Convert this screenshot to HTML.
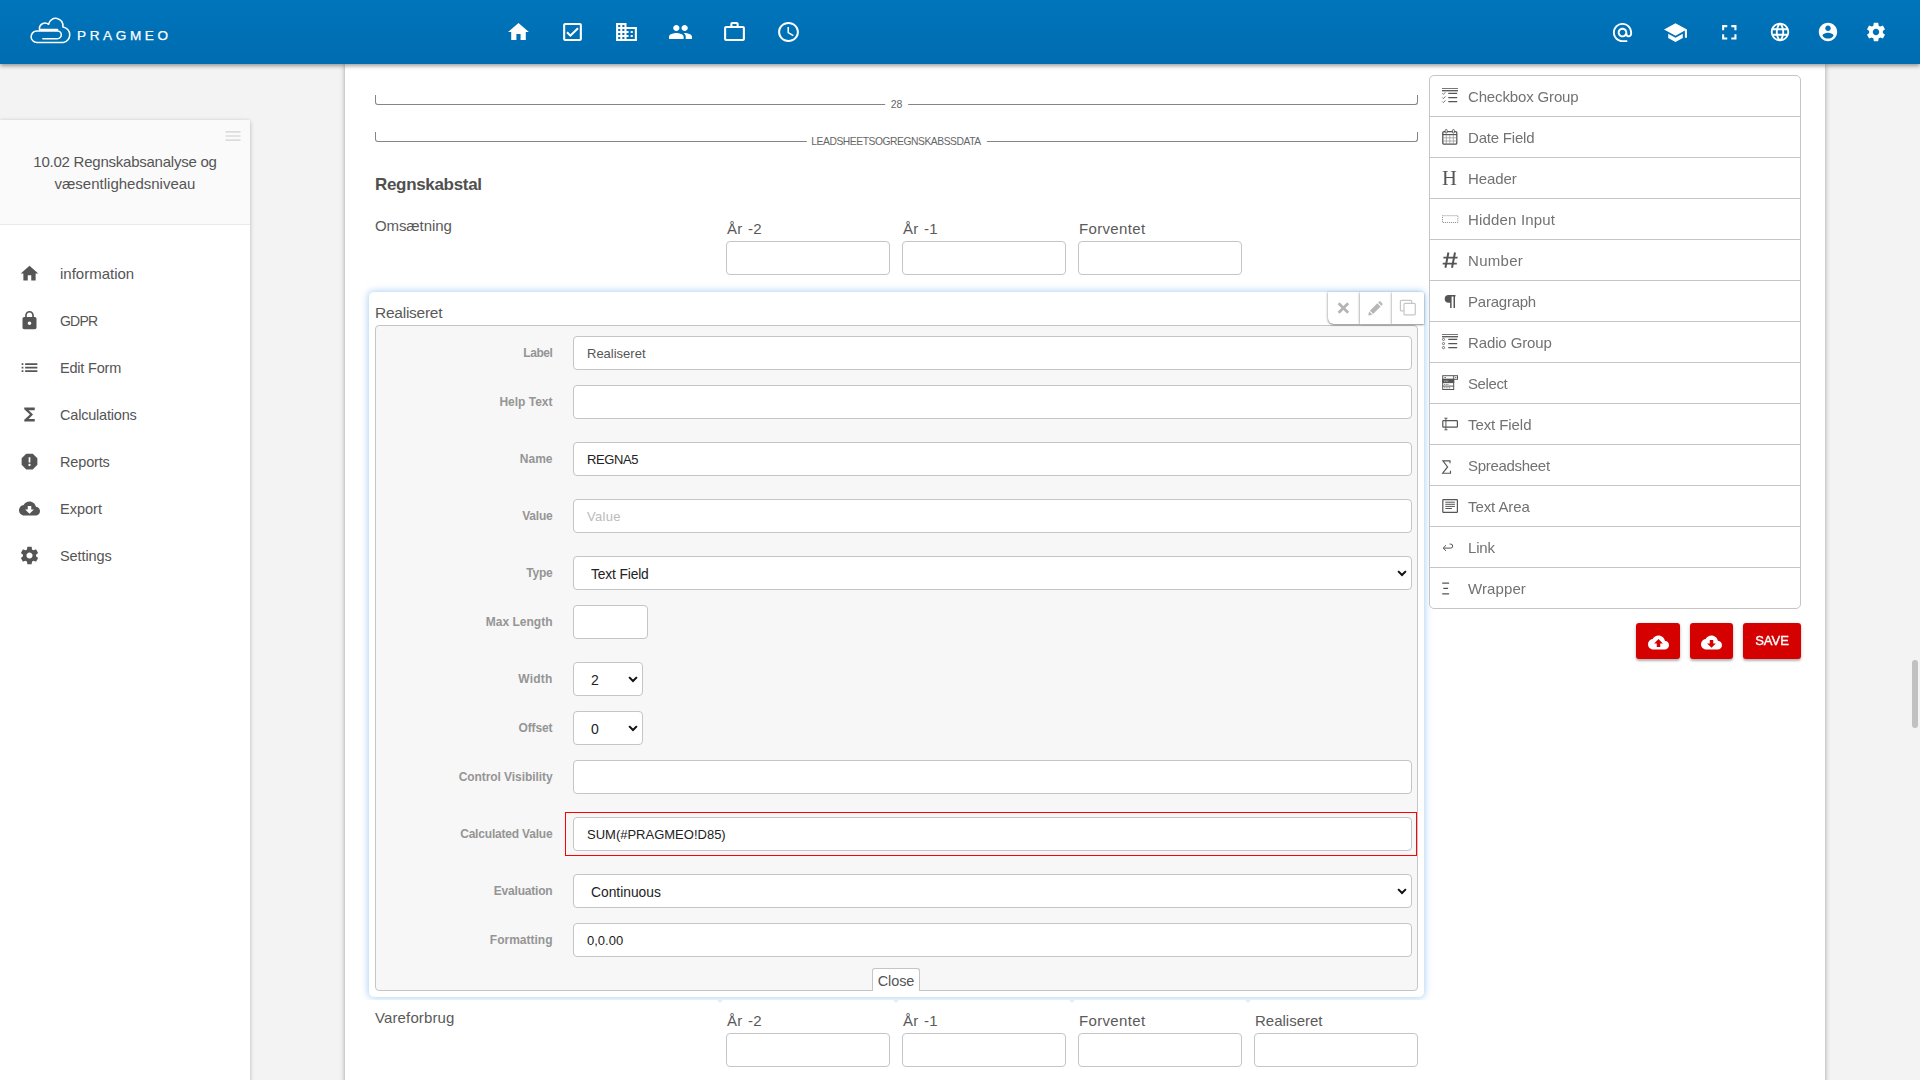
<!DOCTYPE html>
<html>
<head>
<meta charset="utf-8">
<title>Pragmeo</title>
<style>
*{box-sizing:border-box;margin:0;padding:0}
html,body{width:1920px;height:1080px;overflow:hidden;background:#f3f3f3;font-family:"Liberation Sans",sans-serif;color:#555}
.abs{position:absolute}
#top{position:absolute;left:0;top:0;width:1920px;height:64px;background:linear-gradient(#0075bb,#006cb1);box-shadow:0 2px 4px rgba(0,0,0,.38);z-index:10}
#top svg{position:absolute;fill:#fff}
#logo-text{position:absolute;left:77px;top:28px;font-size:13.6px;letter-spacing:3.6px;-webkit-text-stroke:0.25px #fff;color:#fff;line-height:16px}
#side{position:absolute;left:0;top:120px;width:250px;height:980px;background:#fff;box-shadow:0 1px 4px rgba(0,0,0,.26);border-radius:0 2px 0 0}
#side-head{position:absolute;left:0;top:0;width:250px;height:105px;background:#fafafa;border-bottom:1px solid #e9e9e9;border-radius:0 2px 0 0}
#side-title{position:absolute;left:0;top:31px;width:250px;text-align:center;font-size:15px;line-height:22px;color:#555}
.nav{position:absolute;left:60px;font-size:14.5px;line-height:20px;color:#555}
.navi{position:absolute;fill:#555}
#main{position:absolute;left:345px;top:64px;width:1480px;height:1030px;background:#fff;box-shadow:0 0 5px rgba(0,0,0,.35)}
.fs{position:absolute;left:375px;width:1043px;height:10px;border:1px solid #858585;border-top:0;border-radius:0 0 3px 3px}
.fs span{position:absolute;left:50%;transform:translateX(-50%);top:3px;background:#fff;font-size:10.5px;line-height:12px;padding:0 6px;color:#666;white-space:nowrap}
.lbl{position:absolute;font-size:15px;line-height:20px;color:#5a5a5a;white-space:nowrap}
.ar{word-spacing:1px;letter-spacing:.25px}
.inp{position:absolute;height:34px;background:#fff;border:1px solid #c5c5c5;border-radius:4px}
#sel{position:absolute;left:369px;top:292px;width:1055px;height:705px;background:#fff;border-radius:5px;box-shadow:0 0 7px 1px rgba(60,150,230,.42)}
#panel{position:absolute;left:375px;top:325px;width:1043px;height:666px;background:#f7f7f7;border:1px solid #c5c5c5;border-radius:4px}
.fl{position:absolute;left:375.5px;width:177px;text-align:right;font-size:12px;font-weight:bold;color:#959595;line-height:16px;white-space:nowrap}
.fi{position:absolute;left:573px;width:839px;height:34px;background:#fff;border:1px solid #c5c5c5;border-radius:4px;font-size:13px;line-height:33px;padding-left:13px;color:#555;white-space:nowrap}
.fi.dark{color:#222}
.act{top:292px;width:32px;height:32px;background:#fff;box-shadow:0 1px 2px rgba(0,0,0,.42),-1px 0 3px rgba(0,0,0,.13)}
.chev{position:absolute;width:10px;height:6.7px}
#list{position:absolute;left:1429px;top:75px;width:372px;height:534px;background:#fff;border:1px solid #c5c5c5;border-radius:5px}
.li{position:absolute;left:0;width:370px;height:41px;border-bottom:1px solid #c5c5c5}
.li span{position:absolute;left:38px;top:11px;font-size:15px;line-height:20px;color:#727272;white-space:nowrap;will-change:transform}
.li svg{position:absolute}
.btn{position:absolute;top:623px;height:36px;background:#d50000;border-radius:3px;box-shadow:0 2px 2px rgba(0,0,0,.22),0 1px 4px rgba(0,0,0,.14)}
</style>
</head>
<body>
<div id="main"></div>
<div class="fs" style="top:95px"><span>28</span></div>
<div class="fs" style="top:132px"><span style="font-size:10.3px;letter-spacing:-0.45px;padding:0 6px 0 5px;top:4px">LEADSHEETSOGREGNSKABSSDATA</span></div>
<div class="lbl" style="left:375px;top:174px;font-size:17px;font-weight:bold;line-height:22px;letter-spacing:-0.32px;color:#505050">Regnskabstal</div>
<div class="lbl" style="left:375px;top:216px;letter-spacing:-.1px">Omsætning</div>
<div class="lbl ar" style="left:727px;top:219px">År -2</div><div class="inp" style="left:726px;top:241px;width:164px"></div>
<div class="lbl ar" style="left:903px;top:219px">År -1</div><div class="inp" style="left:902px;top:241px;width:164px"></div>
<div class="lbl" style="left:1079px;top:219px;letter-spacing:.34px">Forventet</div><div class="inp" style="left:1078px;top:241px;width:164px"></div>
<div id="sel"></div>
<div class="lbl" style="left:375px;top:302px;font-size:15.5px;line-height:22px;letter-spacing:-0.25px">Realiseret</div>
<div id="panel"></div>
<div class="abs" style="left:565px;top:812px;width:852px;height:44px;border:1px solid #ff0000"></div>
<div class="fl" style="top:345px;letter-spacing:-0.43px">Label</div><div class="fi " style="top:336px;">Realiseret</div>
<div class="fl" style="top:394px">Help Text</div><div class="fi " style="top:385px;"></div>
<div class="fl" style="top:451px">Name</div><div class="fi dark" style="top:442px;"><span style="letter-spacing:-0.4px">REGNA5</span></div>
<div class="fl" style="top:508px;letter-spacing:-0.2px">Value</div><div class="fi " style="top:499px;"><span style="color:#bbb;letter-spacing:0.3px">Value</span></div>
<div class="fl" style="top:565px;letter-spacing:-0.2px">Type</div><div class="fi dark sel" style="top:556px;padding-left:17px;font-size:13.8px;line-height:35px;letter-spacing:-0.14px">Text Field<svg class="chev" viewBox="0 0 9 6" style="right:3.6px;top:13.3px"><path d="M1 1l3.5 3.5L8 1" fill="none" stroke="#111" stroke-width="1.8"/></svg></div>
<div class="fl" style="top:614px">Max Length</div><div class="fl" style="top:671px;letter-spacing:0.2px">Width</div><div class="fl" style="top:720px;letter-spacing:-0.1px">Offset</div><div class="fl" style="top:769px;letter-spacing:-0.07px">Control Visibility</div><div class="fi " style="top:760px;"></div>
<div class="fl" style="top:826px;letter-spacing:-0.19px">Calculated Value</div><div class="fi dark" style="top:817px;">SUM(#PRAGMEO!D85)</div>
<div class="fl" style="top:883px;letter-spacing:-0.2px">Evaluation</div><div class="fi dark sel" style="top:874px;padding-left:17px;font-size:13.8px;line-height:35px">Continuous<svg class="chev" viewBox="0 0 9 6" style="right:3.6px;top:13.3px"><path d="M1 1l3.5 3.5L8 1" fill="none" stroke="#111" stroke-width="1.8"/></svg></div>
<div class="fl" style="top:932px">Formatting</div><div class="fi dark" style="top:923px;">0,0.00</div>
<div class="fi" style="top:605px;width:75px"></div>
<div class="fi dark" style="top:662px;width:70px;padding-left:17px;font-size:14px;line-height:35px">2<svg class="chev" viewBox="0 0 9 6" style="right:3.6px;top:13.3px"><path d="M1 1l3.5 3.5L8 1" fill="none" stroke="#111" stroke-width="1.8"/></svg></div>
<div class="fi dark" style="top:711px;width:70px;padding-left:17px;font-size:14px;line-height:35px">0<svg class="chev" viewBox="0 0 9 6" style="right:3.6px;top:13.3px"><path d="M1 1l3.5 3.5L8 1" fill="none" stroke="#111" stroke-width="1.8"/></svg></div>
<div class="abs" style="left:872px;top:968px;width:48px;height:23px;background:#fff;border:1px solid #c5c5c5;border-bottom:0;border-radius:3px 3px 0 0;font-size:14.5px;letter-spacing:-.1px;line-height:24px;text-align:center;color:#555">Close</div>
<div class="abs act" style="left:1328px;border-radius:0 0 0 6px"><svg class="abs" style="left:9px;top:10px" width="13" height="12" viewBox="0 0 13 12"><path d="M1.6 1.3l9.6 9.4M11.2 1.3L1.6 10.7" stroke="#b4b4b4" stroke-width="2.7" fill="none"/></svg></div>
<div class="abs act" style="left:1360px"><svg class="abs" style="left:8px;top:9px" width="15" height="15" viewBox="0 0 15 15"><path d="M0.2 14.6l0.9-4.1 3.4 3.3z M1.9 9.7l7.4-7.4 3.3 3.3-7.4 7.4z M10.1 1.5l1-1c.4-.4 1-.4 1.4 0l1.9 1.9c.4.4.4 1 0 1.4l-1 1z" fill="#b7b7b7"/></svg></div>
<div class="abs act" style="left:1392px;border-radius:0 2px 0 0"><svg class="abs" style="left:7px;top:7px" width="18" height="18" viewBox="0 0 18 18"><rect x="1.4" y="1.3" width="11.3" height="10.6" rx="1" fill="#fff" stroke="#c6c6c6" stroke-width="1.2"/><rect x="5" y="4.3" width="11.3" height="11.6" rx="1" fill="#fff" stroke="#c6c6c6" stroke-width="1.2"/></svg></div>
<div class="abs" style="left:355px;top:1000px;width:1085px;height:10px;background:#fff"></div>
<div class="abs" style="left:716.5px;top:1000px;width:0;height:0;border-left:3.5px solid transparent;border-right:3.5px solid transparent;border-top:3px solid #e3eefa"></div><div class="abs" style="left:892.5px;top:1000px;width:0;height:0;border-left:3.5px solid transparent;border-right:3.5px solid transparent;border-top:3px solid #e3eefa"></div><div class="abs" style="left:1068.5px;top:1000px;width:0;height:0;border-left:3.5px solid transparent;border-right:3.5px solid transparent;border-top:3px solid #e3eefa"></div><div class="abs" style="left:1244.5px;top:1000px;width:0;height:0;border-left:3.5px solid transparent;border-right:3.5px solid transparent;border-top:3px solid #e3eefa"></div>
<div class="lbl" style="left:375px;top:1008px;letter-spacing:0.13px">Vareforbrug</div>
<div class="lbl ar" style="left:727px;top:1011px">År -2</div><div class="inp" style="left:726px;top:1033px;width:164px"></div>
<div class="lbl ar" style="left:903px;top:1011px">År -1</div><div class="inp" style="left:902px;top:1033px;width:164px"></div>
<div class="lbl" style="left:1079px;top:1011px;letter-spacing:.34px">Forventet</div><div class="inp" style="left:1078px;top:1033px;width:164px"></div>
<div class="lbl" style="left:1255px;top:1011px">Realiseret</div><div class="inp" style="left:1254px;top:1033px;width:164px"></div>
<div id="list">
<div class="li" style="top:0px;"><svg width="17" height="18" viewBox="0 0 17 18" style="left:12px;top:12px;overflow:visible"><g fill="none" stroke="#555"><path d="M0 .5H16" stroke-width=".8"/><path d="M0 2.7H16" stroke-width="1.3"/><path d="M6.3 5.4H15.2M6.3 9.6H15.2M6.3 13.6H15.2" stroke-width="1.15"/><path d="M.3 5.3l1.1 1.1 2-2.2M.3 9.5l1.1 1.1 2-2.2M.3 13.5l1.1 1.1 2-2.2" stroke-width=".8"/></g></svg><span style="letter-spacing:-0.15px">Checkbox Group</span></div>
<div class="li" style="top:41px;"><svg width="17" height="18" viewBox="0 0 17 18" style="left:12px;top:12px;overflow:visible"><g fill="none" stroke="#555"><rect x=".8" y="2.6" width="14" height="12.6" rx="1.2" stroke-width="1.3"/><path d="M.8 5.6H14.8" stroke-width="1.2"/><path d="M4.3 5.8V15M7.8 5.8V15M11.3 5.8V15M1 8.8H14.6M1 12H14.6" stroke="#999" stroke-width=".8"/><rect x="3.2" y=".5" width="2" height="3.6" rx="1" fill="#fff" stroke-width=".9"/><rect x="10.4" y=".5" width="2" height="3.6" rx="1" fill="#fff" stroke-width=".9"/></g></svg><span style="letter-spacing:-0.2px">Date Field</span></div>
<div class="li" style="top:82px;"><svg width="17" height="18" viewBox="0 0 17 18" style="left:12px;top:12px;overflow:visible"><text x="0" y="14.9" font-family="Liberation Serif" font-size="20.6" fill="#555" style="will-change:transform">H</text></svg><span style="letter-spacing:-0.1px">Header</span></div>
<div class="li" style="top:123px;"><svg width="17" height="18" viewBox="0 0 17 18" style="left:12px;top:12px;overflow:visible"><rect x=".5" y="4.7" width="15.4" height="6.8" fill="none" stroke="#8a8a8a" stroke-width="1" stroke-dasharray="1 1"/></svg><span style="letter-spacing:0.17px">Hidden Input</span></div>
<div class="li" style="top:164px;"><svg width="17" height="18" viewBox="0 0 17 18" style="left:12px;top:12px;overflow:visible"><g fill="none" stroke="#555"><path d="M1.4 5.6H15.6M.7 11.6H14.8" stroke-width="1.9"/><path d="M6.4 .5L3.4 15.8M13 .5L10 15.8" stroke-width="2"/></g></svg><span style="letter-spacing:0.3px">Number</span></div>
<div class="li" style="top:205px;"><svg width="17" height="18" viewBox="0 0 17 18" style="left:12px;top:12px;overflow:visible"><path d="M6.6 1.9H13.5V3.6H13V15.1H11.5V3.6H9.6V15.1H8.1V9.7H6.6A3.9 3.9 0 0 1 6.6 1.9z" fill="#555"/></svg><span style="letter-spacing:-0.23px">Paragraph</span></div>
<div class="li" style="top:246px;"><svg width="17" height="18" viewBox="0 0 17 18" style="left:12px;top:12px;overflow:visible"><g fill="none" stroke="#555"><path d="M0 .5H16" stroke-width=".8"/><path d="M0 2.7H16" stroke-width="1.3"/><path d="M6.3 5.4H15.2M6.3 9.6H15.2M6.3 13.6H15.2" stroke-width="1.15"/><circle cx="1.5" cy="5.4" r="1.1" stroke-width=".8"/><circle cx="1.5" cy="9.6" r="1.1" stroke-width=".8"/><circle cx="1.5" cy="13.6" r="1.1" stroke-width=".8"/></g></svg><span style="letter-spacing:-0.12px">Radio Group</span></div>
<div class="li" style="top:287px;"><svg width="17" height="18" viewBox="0 0 17 18" style="left:12px;top:12px;overflow:visible"><g fill="none" stroke="#555" stroke-width="1"><rect x=".7" y=".7" width="14.8" height="3.6"/><path d="M11.7 .7V4.3"/><rect x=".7" y="4.3" width="11" height="10.2"/><rect x=".7" y="4.6" width="11" height="3" fill="#555"/><path d="M.7 11.1H11.7"/><path d="M2.4 2.5H4M13 2.5H14.4" stroke-width=".8"/><path d="M2.2 6.1H6.2" stroke="#fff" stroke-width=".8" stroke-dasharray="1 .6"/><path d="M2.2 9.4H7.2M2.2 12.8H8.8" stroke-width=".8" stroke-dasharray="1 .6"/></g></svg><span style="letter-spacing:-0.4px">Select</span></div>
<div class="li" style="top:328px;"><svg width="17" height="18" viewBox="0 0 17 18" style="left:12px;top:12px;overflow:visible"><g fill="none" stroke="#555"><rect x=".8" y="4.6" width="14.6" height="6.6" rx=".8" stroke-width="1.2"/><path d="M3.9 2V14" stroke-width="1"/><path d="M2.3 2.2H5.5M2.3 13.8H5.5" stroke-width=".9"/></g></svg><span style="letter-spacing:-0.08px">Text Field</span></div>
<div class="li" style="top:369px;"><svg width="17" height="18" viewBox="0 0 17 18" style="left:12px;top:12px;overflow:visible"><path d="M8 6.2V3.9H.9L5.6 9.9.7 16.2H8.5V13.8" fill="none" stroke="#555" stroke-width="1.15"/></svg><span style="letter-spacing:-0.3px">Spreadsheet</span></div>
<div class="li" style="top:410px;"><svg width="17" height="18" viewBox="0 0 17 18" style="left:12px;top:12px;overflow:visible"><g fill="none" stroke="#555"><rect x=".8" y="1.7" width="14.6" height="12.6" rx=".6" stroke-width="1.2"/><path d="M3.3 4.2H12.9M3.3 6.3H12.9M3.3 8.4H12.9M3.3 10.5H9.9" stroke-width="1"/></g></svg><span style="letter-spacing:-0.08px">Text Area</span></div>
<div class="li" style="top:451px;"><svg width="17" height="18" viewBox="0 0 17 18" style="left:12px;top:12px;overflow:visible"><path d="M1.2 9.1H8.7A2 2 0 0 0 8.7 5.1H7.6M4 6.3L1.2 9.1 4 11.9" fill="none" stroke="#555" stroke-width="1"/></svg><span style="letter-spacing:-0.2px">Link</span></div>
<div class="li" style="top:492px;border-bottom:0;"><svg width="17" height="18" viewBox="0 0 17 18" style="left:12px;top:12px;overflow:visible"><path d="M.2 3.1H7.1M1.3 8.4H6.1M.2 13.8H7.1" fill="none" stroke="#555" stroke-width="1.2"/></svg><span style="letter-spacing:0.1px">Wrapper</span></div>
</div>
<div class="btn" style="left:1636px;width:44px"><svg viewBox="0 0 24 24" width="21" height="21" style="position:absolute;left:11.5px;top:9px;fill:#fff"><path d="M19.35 10.04C18.67 6.59 15.64 4 12 4 9.11 4 6.6 5.64 5.35 8.04 2.34 8.36 0 10.91 0 14c0 3.31 2.69 6 6 6h13c2.76 0 5-2.24 5-5 0-2.64-2.05-4.78-4.65-4.96zM14 13v4h-4v-4H7l5-5 5 5h-3z"/></svg></div>
<div class="btn" style="left:1690px;width:43px"><svg viewBox="0 0 24 24" width="21" height="21" style="position:absolute;left:11px;top:9px;fill:#fff"><path d="M19.35 10.04C18.67 6.59 15.64 4 12 4 9.11 4 6.6 5.64 5.35 8.04 2.34 8.36 0 10.91 0 14c0 3.31 2.69 6 6 6h13c2.76 0 5-2.24 5-5 0-2.64-2.05-4.78-4.65-4.96zM17 13l-5 5-5-5h3V9h4v4h3z"/></svg></div>
<div class="btn" style="left:1743px;width:58px;color:#fff;font-size:13px;line-height:36px;text-align:center;-webkit-text-stroke:.35px #fff;will-change:transform">SAVE</div>
<div class="abs" style="left:1912px;top:660px;width:6px;height:68px;background:#c1c1c1;border-radius:3px"></div>

<div id="top">
  <svg id="cloud" viewBox="0 0 50 44" width="50" height="44" style="left:24px;top:10px;fill:none;stroke:#fff;stroke-width:1.55;stroke-linecap:round;stroke-linejoin:round"><path d="M18.9 28.7H33.4A3.85 3.85 0 0 0 33.4 20.9H12.9A5.8 5.8 0 0 0 12.9 32.5H39.3A7.9 7.9 0 0 0 38.9 16.9A7.2 7.2 0 0 0 24.6 14.3A5.6 5.6 0 0 0 15.5 19.4H33.6"/></svg>
<div id="logo-text">PRAGMEO</div>
<svg viewBox="0 0 24 24" width="25" height="24" preserveAspectRatio="none" style="left:506px;top:20px"><path d="M10 20v-6h4v6h5v-8h3L12 3 2 12h3v8z"/></svg>
<svg viewBox="0 0 24 24" width="25" height="24" preserveAspectRatio="none" style="left:560px;top:20px"><path d="M19 3H5c-1.11 0-2 .9-2 2v14c0 1.1.89 2 2 2h14c1.11 0 2-.9 2-2V5c0-1.1-.89-2-2-2zm0 16H5V5h14v14zM17.99 9l-1.41-1.42-6.59 6.59-2.58-2.57-1.4 1.41 3.98 3.99z"/></svg>
<svg viewBox="0 0 24 24" width="25" height="24" preserveAspectRatio="none" style="left:614px;top:20px"><path d="M12 7V3H2v18h20V7H12zM6 19H4v-2h2v2zm0-4H4v-2h2v2zm0-4H4V9h2v2zm0-4H4V5h2v2zm4 12H8v-2h2v2zm0-4H8v-2h2v2zm0-4H8V9h2v2zm0-4H8V5h2v2zm10 12h-8v-2h2v-2h-2v-2h2v-2h-2V9h8v10zm-2-8h-2v2h2v-2zm0 4h-2v2h2v-2z"/></svg>
<svg viewBox="0 0 24 24" width="25" height="24" preserveAspectRatio="none" style="left:668px;top:20px"><path d="M16 11c1.66 0 2.99-1.34 2.99-3S17.66 5 16 5c-1.66 0-3 1.34-3 3s1.34 3 3 3zm-8 0c1.66 0 2.99-1.34 2.99-3S9.66 5 8 5C6.34 5 5 6.34 5 8s1.34 3 3 3zm0 2c-2.33 0-7 1.17-7 3.5V19h14v-2.5c0-2.33-4.67-3.5-7-3.5zm8 0c-.29 0-.62.02-.97.05 1.16.84 1.97 1.97 1.97 3.45V19h6v-2.5c0-2.33-4.67-3.5-7-3.5z"/></svg>
<svg viewBox="0 0 24 24" width="25" height="24" preserveAspectRatio="none" style="left:722px;top:20px"><path d="M14 6V4h-4v2h4zM4 8v11h16V8H4zm16-2c1.11 0 2 .89 2 2v11c0 1.11-.89 2-2 2H4c-1.11 0-2-.89-2-2l.01-11c0-1.11.88-2 1.99-2h4V4c0-1.11.89-2 2-2h4c1.11 0 2 .89 2 2v2h4z"/></svg>
<svg viewBox="0 0 24 24" width="25" height="24" preserveAspectRatio="none" style="left:776px;top:20px"><path d="M11.99 2C6.47 2 2 6.48 2 12s4.47 10 9.99 10C17.52 22 22 17.52 22 12S17.52 2 11.99 2zM12 20c-4.42 0-8-3.58-8-8s3.58-8 8-8 8 3.58 8 8-3.58 8-8 8zm.5-13H11v6l5.25 3.15.75-1.23-4.5-2.67z"/></svg>
<svg viewBox="0 0 24 24" width="23" height="23" style="left:1610.8px;top:20.5px"><path d="M12 2C6.48 2 2 6.48 2 12s4.48 10 10 10h5v-2h-5c-4.34 0-8-3.66-8-8s3.66-8 8-8 8 3.66 8 8v1.43c0 .79-.71 1.57-1.5 1.57s-1.5-.78-1.5-1.57V12c0-2.76-2.24-5-5-5s-5 2.24-5 5 2.24 5 5 5c1.38 0 2.64-.56 3.54-1.47.65.89 1.77 1.47 2.96 1.47 1.97 0 3.5-1.6 3.5-3.57V12c0-5.52-4.48-10-10-10zm0 13c-1.66 0-3-1.34-3-3s1.34-3 3-3 3 1.34 3 3-1.34 3-3 3z"/></svg>
<svg viewBox="0 0 24 24" width="25" height="25" style="left:1662.9px;top:19.5px"><path d="M5 13.18v4L12 21l7-3.82v-4L12 17l-7-3.82zM12 3L1 9l11 6 9-4.91V17h2V9L12 3z"/></svg>
<svg viewBox="0 0 24 24" width="24.6" height="24.6" style="left:1716.7px;top:19.7px"><path d="M7 14H5v5h5v-2H7v-3zm-2-4h2V7h3V5H5v5zm12 7h-3v2h5v-5h-2v3zM14 5v2h3v3h2V5h-5z"/></svg>
<svg viewBox="0 0 24 24" width="22" height="22" style="left:1769.0px;top:21.0px"><path d="M11.99 2C6.47 2 2 6.48 2 12s4.47 10 9.99 10C17.52 22 22 17.52 22 12S17.52 2 11.99 2zm6.93 6h-2.95c-.32-1.25-.78-2.45-1.38-3.56 1.84.63 3.37 1.91 4.33 3.56zM12 4.04c.83 1.2 1.48 2.53 1.91 3.96h-3.82c.43-1.43 1.08-2.76 1.91-3.96zM4.26 14C4.1 13.36 4 12.69 4 12s.1-1.36.26-2h3.38c-.08.66-.14 1.32-.14 2 0 .68.06 1.34.14 2H4.26zm.82 2h2.95c.32 1.25.78 2.45 1.38 3.56-1.84-.63-3.37-1.9-4.33-3.56zm2.95-8H5.08c.96-1.66 2.49-2.93 4.33-3.56C8.81 5.55 8.35 6.75 8.03 8zM12 19.96c-.83-1.2-1.48-2.53-1.91-3.96h3.82c-.43 1.43-1.08 2.76-1.91 3.96zM14.34 14H9.66c-.09-.66-.16-1.32-.16-2 0-.68.07-1.35.16-2h4.68c.09.65.16 1.32.16 2 0 .68-.07 1.34-.16 2zm.25 5.56c.6-1.11 1.06-2.31 1.38-3.56h2.95c-.96 1.65-2.49 2.93-4.33 3.56zM16.36 14c.08-.66.14-1.32.14-2 0-.68-.06-1.34-.14-2h3.38c.16.64.26 1.31.26 2s-.1 1.36-.26 2h-3.38z"/></svg>
<svg viewBox="0 0 24 24" width="22" height="22" style="left:1817.0px;top:21.0px"><path d="M12 2C6.48 2 2 6.48 2 12s4.48 10 10 10 10-4.48 10-10S17.52 2 12 2zm0 3c1.66 0 3 1.34 3 3s-1.34 3-3 3-3-1.34-3-3 1.34-3 3-3zm0 14.2c-2.5 0-4.71-1.28-6-3.22.03-1.99 4-3.08 6-3.08 1.99 0 5.97 1.09 6 3.08-1.29 1.94-3.5 3.22-6 3.22z"/></svg>
<svg viewBox="0 0 24 24" width="22" height="22" style="left:1865.2px;top:21.0px"><path d="M19.43 12.98c.04-.32.07-.64.07-.98s-.03-.66-.07-.98l2.11-1.65c.19-.15.24-.42.12-.64l-2-3.46c-.12-.22-.39-.3-.61-.22l-2.49 1c-.52-.4-1.08-.73-1.69-.98l-.38-2.65C14.46 2.18 14.25 2 14 2h-4c-.25 0-.46.18-.49.42l-.38 2.65c-.61.25-1.17.59-1.69.98l-2.49-1c-.23-.09-.49 0-.61.22l-2 3.46c-.13.22-.07.49.12.64l2.11 1.65c-.04.32-.07.65-.07.98s.03.66.07.98l-2.11 1.65c-.19.15-.24.42-.12.64l2 3.46c.12.22.39.3.61.22l2.49-1c.52.4 1.08.73 1.69.98l.38 2.65c.03.24.24.42.49.42h4c.25 0 .46-.18.49-.42l.38-2.65c.61-.25 1.17-.59 1.69-.98l2.49 1c.23.09.49 0 .61-.22l2-3.46c.12-.22.07-.49-.12-.64l-2.11-1.65zM12 15.5c-1.93 0-3.5-1.57-3.5-3.5s1.57-3.5 3.5-3.5 3.5 1.57 3.5 3.5-1.57 3.5-3.5 3.5z"/></svg>

</div>
<div id="side">
  <div id="side-head"></div>
  <div id="side-title"><span style="letter-spacing:-0.24px">10.02 Regnskabsanalyse og</span><br>væsentlighedsniveau</div>
<svg class="navi" viewBox="0 0 24 24" width="21" height="21" style="left:18.5px;top:143.2px"><path d="M10 20v-6h4v6h5v-8h3L12 3 2 12h3v8z"/></svg><div class="nav" style="top:144px;font-size:15px">information</div>
<svg class="navi" viewBox="0 0 24 24" width="21" height="21" style="left:18.5px;top:190.2px"><path d="M18 8h-1V6c0-2.76-2.24-5-5-5S7 3.24 7 6v2H6c-1.1 0-2 .9-2 2v10c0 1.1.9 2 2 2h12c1.1 0 2-.9 2-2V10c0-1.1-.9-2-2-2zm-6 9c-1.1 0-2-.9-2-2s.9-2 2-2 2 .9 2 2-.9 2-2 2zm3.1-9H8.9V6c0-1.71 1.39-3.1 3.1-3.1 1.71 0 3.1 1.39 3.1 3.1v2z"/></svg><div class="nav" style="top:191px;font-size:14px;letter-spacing:-0.8px">GDPR</div>
<svg class="navi" viewBox="0 0 24 24" width="21" height="21" style="left:18.5px;top:237.2px"><path d="M3 13h2v-2H3v2zm0 4h2v-2H3v2zm0-8h2V7H3v2zm4 4h14v-2H7v2zm0 4h14v-2H7v2zM7 7v2h14V7H7z"/></svg><div class="nav" style="top:238px;letter-spacing:-0.2px">Edit Form</div>
<svg class="navi" viewBox="0 0 24 24" width="21" height="21" style="left:18.5px;top:284.2px"><path d="M18 4H6v2l6.5 6L6 18v2h12v-3h-7l5-5-5-5h7z"/></svg><div class="nav" style="top:285px;letter-spacing:-0.2px">Calculations</div>
<svg class="navi" viewBox="0 0 24 24" width="21" height="21" style="left:18.5px;top:331.2px"><path d="M15.73 3H8.27L3 8.27v7.46L8.27 21h7.46L21 15.73V8.27L15.73 3zM12 17.3c-.72 0-1.3-.58-1.3-1.3 0-.72.58-1.3 1.3-1.3.72 0 1.3.58 1.3 1.3 0 .72-.58 1.3-1.3 1.3zm1-4.3h-2V7h2v6z"/></svg><div class="nav" style="top:332px;letter-spacing:-0.15px">Reports</div>
<svg class="navi" viewBox="0 0 24 24" width="21" height="21" style="left:18.5px;top:378.2px"><path d="M19.35 10.04C18.67 6.59 15.64 4 12 4 9.11 4 6.6 5.64 5.35 8.04 2.34 8.36 0 10.91 0 14c0 3.31 2.69 6 6 6h13c2.76 0 5-2.24 5-5 0-2.64-2.05-4.78-4.65-4.96zM17 13l-5 5-5-5h3V9h4v4h3z"/></svg><div class="nav" style="top:379px">Export</div>
<svg class="navi" viewBox="0 0 24 24" width="21" height="21" style="left:18.5px;top:425.2px"><path d="M19.43 12.98c.04-.32.07-.64.07-.98s-.03-.66-.07-.98l2.11-1.65c.19-.15.24-.42.12-.64l-2-3.46c-.12-.22-.39-.3-.61-.22l-2.49 1c-.52-.4-1.08-.73-1.69-.98l-.38-2.65C14.46 2.18 14.25 2 14 2h-4c-.25 0-.46.18-.49.42l-.38 2.65c-.61.25-1.17.59-1.69.98l-2.49-1c-.23-.09-.49 0-.61.22l-2 3.46c-.13.22-.07.49.12.64l2.11 1.65c-.04.32-.07.65-.07.98s.03.66.07.98l-2.11 1.65c-.19.15-.24.42-.12.64l2 3.46c.12.22.39.3.61.22l2.49-1c.52.4 1.08.73 1.69.98l.38 2.65c.03.24.24.42.49.42h4c.25 0 .46-.18.49-.42l.38-2.65c.61-.25 1.17-.59 1.69-.98l2.49 1c.23.09.49 0 .61-.22l2-3.46c.12-.22.07-.49-.12-.64l-2.11-1.65zM12 15.5c-1.93 0-3.5-1.57-3.5-3.5s1.57-3.5 3.5-3.5 3.5 1.57 3.5 3.5-1.57 3.5-3.5 3.5z"/></svg><div class="nav" style="top:426px;letter-spacing:-0.1px">Settings</div>
<svg class="navi" viewBox="0 0 24 24" width="20" height="20" style="left:223.2px;top:6.1px;fill:#dcdcdc"><path d="M3 18h18v-2H3v2zm0-5h18v-2H3v2zm0-7v2h18V6H3z"/></svg>

</div>
</body>
</html>
